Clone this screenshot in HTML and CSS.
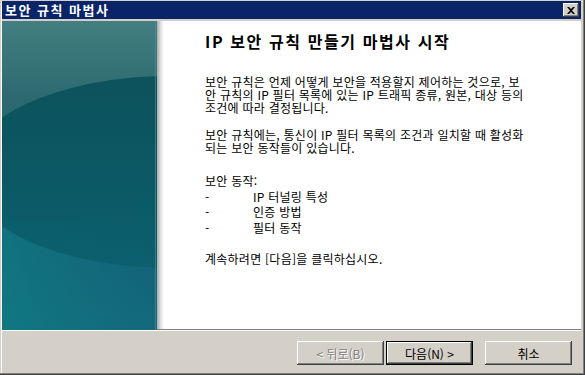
FILE: index.html
```html
<!DOCTYPE html>
<html lang="ko">
<head>
  <meta charset="UTF-8">
  <title>보안 규칙 마법사</title>
  <link rel="stylesheet" href="styles.css">
</head>
<body>
  <div class="window">
    <div class="titlebar">
      <span class="title">보안 규칙 마법사</span>
      <span class="close">
        <svg width="8" height="7" viewBox="0 0 8 7">
          <path d="M0 0h2l2 2 2-2h2L5 3.5 8 7H6L4 5 2 7H0l3-3.5z" fill="#000"/>
        </svg>
      </span>
    </div>

    <div class="main">
      <div class="side">
        <svg class="art" width="155" height="309" viewBox="0 0 155 309">
          <defs>
            <linearGradient id="base" x1="0" y1="0" x2="0" y2="1">
              <stop offset="0" stop-color="#437f80"/>
              <stop offset="0.25" stop-color="#2c6a70"/>
              <stop offset="0.7" stop-color="#0f6070"/>
              <stop offset="1" stop-color="#10707c"/>
            </linearGradient>
            <linearGradient id="side" x1="0" y1="0" x2="1" y2="0">
              <stop offset="0" stop-color="#107c84" stop-opacity="0.7"/>
              <stop offset="1" stop-color="#17627c" stop-opacity="0.5"/>
            </linearGradient>
            <linearGradient id="oval" x1="0" y1="0" x2="0" y2="1">
              <stop offset="0" stop-color="#064d57"/>
              <stop offset="1" stop-color="#0b5f6d"/>
            </linearGradient>
          </defs>
          <rect width="155" height="309" fill="url(#base)"/>
          <rect y="200" width="155" height="109" fill="url(#side)"/>
          <ellipse cx="168" cy="151" rx="204" ry="96" fill="url(#oval)" opacity="0.85"/>
          <rect x="153" width="1" height="309" fill="#5d8e94" opacity="0.6"/>
        </svg>
        <div class="shade"></div>
      </div>

      <div class="content">
        <h1>IP 보안 규칙 만들기 마법사 시작</h1>
        <p class="intro">보안 규칙은 언제 어떻게 보안을 적용할지 제어하는 것으로, 보<br>안 규칙의 IP 필터 목록에 있는 IP 트래픽 종류, 원본, 대상 등의<br>조건에 따라 결정됩니다.</p>
        <p class="intro second">보안 규칙에는, 통신이 IP 필터 목록의 조건과 일치할 때 활성화<br>되는 보안 동작들이 있습니다.</p>
        <div class="actions">
          <div>보안 동작:</div>
          <div class="item"><span class="dash">-</span>IP 터널링 특성</div>
          <div class="item"><span class="dash">-</span>인증 방법</div>
          <div class="item"><span class="dash">-</span>필터 동작</div>
        </div>
        <p class="hint">계속하려면 [다음]을 클릭하십시오.</p>
      </div>
    </div>

    <div class="footer">
      <span class="btn disabled">&lt; 뒤로(B)</span>
      <span class="btn default">다음(N) &gt;</span>
      <span class="btn cancel">취소</span>
    </div>
  </div>
</body>
</html>
```

FILE: styles.css
```css
*{
  margin:0;
  padding:0;
  box-sizing:border-box;
}

body{
  background:#d4d0c8;
  font-family:"Noto Sans CJK KR", "Liberation Sans", sans-serif;
  font-size:12px;
  color:#000;
}

.window{
  width:585px;
  height:375px;
  padding:1px 4px 2px 2px;
  background:#d4d0c8;
  display:flex;
  flex-direction:column;
  box-shadow:inset -1px -1px #404040, inset -2px -2px #808080, inset 1px 1px #d4d0c8, inset 2px 2px #fff;
}

.titlebar{
  height:18px;
  flex:none;
  background:#0a246a;
  display:flex;
  align-items:center;
  justify-content:space-between;
  padding:0 2px 0 3px;
}
.title{
  color:#fff;
  font-weight:bold;
  font-size:13px;
  letter-spacing:1.5px;
  line-height:18px;
}
.close{
  width:16px;
  height:14px;
  background:#d4d0c8;
  display:flex;
  align-items:center;
  justify-content:center;
  box-shadow:inset -1px -1px #404040, inset 1px 1px #fff, inset -2px -2px #808080;
}

.main{
  margin-top:2px;
  height:309px;
  flex:none;
  display:flex;
  background:#fff;
  border-bottom:1px solid #808080;
}
.side{
  display:flex;
  flex:none;
}
.art{display:block;}
.shade{
  width:7px;
  background:linear-gradient(to right, #a7acac, #e6e6e6 60%, #fff);
}

.content{
  flex:1;
  padding:10px 0 0 41px;
  white-space:nowrap;
  letter-spacing:0.25px;
}
.content h1{
  font-size:16px;
  font-weight:bold;
  line-height:20px;
  letter-spacing:1.6px;
}
.intro{
  margin-top:24px;
  line-height:13px;
}
.intro.second{margin-top:14px;}

.actions{
  margin-top:19px;
  line-height:15.5px;
}
.item{display:flex;}
.dash{width:48px;}

.hint{
  margin-top:17px;
  line-height:13px;
}

.footer{
  flex:1;
  border-top:1px solid #fff;
  display:flex;
  justify-content:flex-end;
  align-items:flex-start;
  padding:10px 9px 0 0;
}
.btn{
  width:87px;
  height:24px;
  display:flex;
  align-items:center;
  justify-content:center;
  background:#d4d0c8;
  box-shadow:inset -1px -1px #404040, inset 1px 1px #fff, inset -2px -2px #808080;
}
.btn.disabled{
  color:#808080;
  text-shadow:1px 1px #fff;
}
.btn.default{
  margin-left:2px;
  border:1px solid #000;
}
.btn.cancel{margin-left:12px;}
```
